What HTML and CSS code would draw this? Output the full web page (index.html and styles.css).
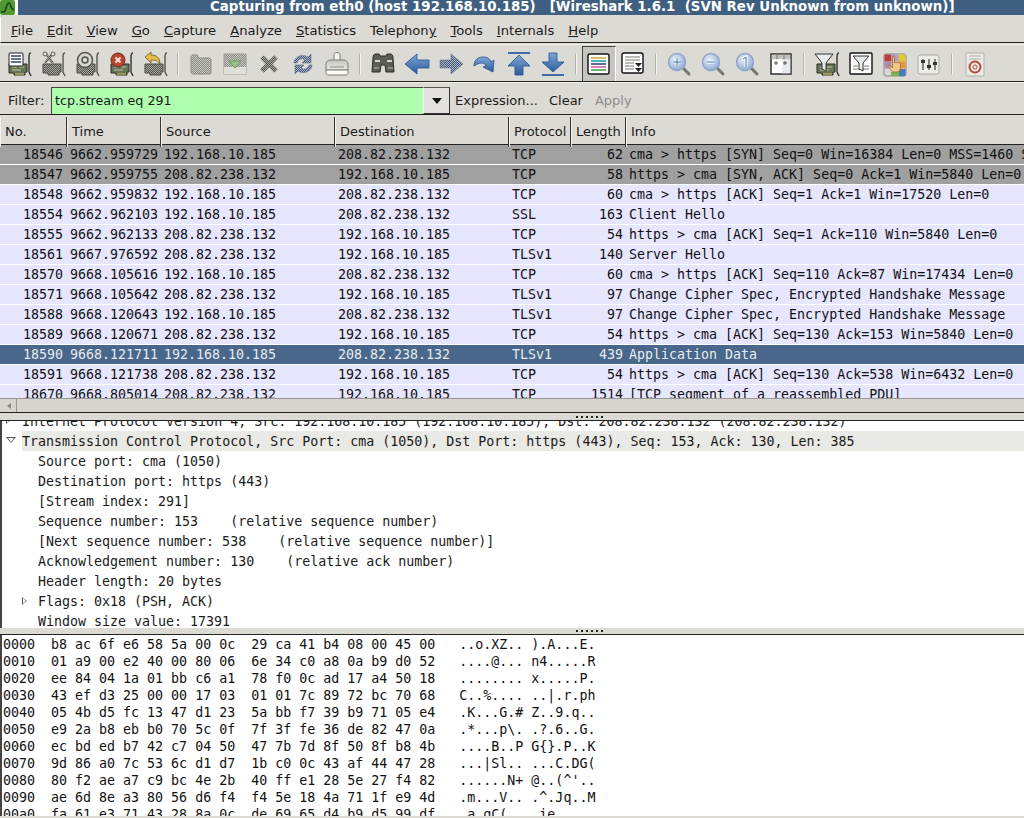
FILE: index.html
```html
<!DOCTYPE html>
<html lang="en">
<head>
    <meta charset="UTF-8">
    <title>Capturing from eth0</title>
    <link rel="stylesheet" href="styles.css">
</head>
<body>
    <!-- Shared icon parts -->
    <svg class="sprite">
        <defs>
            <pattern id="dith" width="2" height="2" patternUnits="userSpaceOnUse">
                <rect width="2" height="2" fill="#a8a8a2"/>
                <rect width="1" height="1" fill="#55554f"/>
                <rect x="1" y="1" width="1" height="1" fill="#55554f"/>
            </pattern>
            <pattern id="dithLight" width="2" height="2" patternUnits="userSpaceOnUse">
                <rect width="2" height="2" fill="#c8c8c2"/>
                <rect width="1" height="1" fill="#8c8c86"/>
                <rect x="1" y="1" width="1" height="1" fill="#8c8c86"/>
            </pattern>
            <pattern id="dithBlue" width="2" height="2" patternUnits="userSpaceOnUse">
                <rect width="2" height="2" fill="#a9b4c4"/>
                <rect width="1" height="1" fill="#44597a"/>
                <rect x="1" y="1" width="1" height="1" fill="#44597a"/>
            </pattern>
            <linearGradient id="blue" x1="0" y1="0" x2="0" y2="1">
                <stop offset="0" stop-color="#7fa6d6"/>
                <stop offset="1" stop-color="#2a5c9e"/>
            </linearGradient>
            <linearGradient id="printer" x1="0" y1="0" x2="0" y2="1">
                <stop offset="0" stop-color="#c4c4be"/>
                <stop offset="1" stop-color="#ecece8"/>
            </linearGradient>
            <radialGradient id="lens" cx="0.4" cy="0.35" r="0.8">
                <stop offset="0" stop-color="#e6eefa"/>
                <stop offset="1" stop-color="#7f9fcc"/>
            </radialGradient>
            <g id="card">
                <path d="M4 14h18v8h-2v3h-11v-2h-5z" fill="#66745a" stroke="#2b2b27"/>
                <path d="M7 17h5M14 17h5M7 20h9" stroke="#c4c89c"/>
                <path d="M10 24h9" stroke="#b5a654" stroke-width="1.5"/>
                <path d="M26 3c-2 0-2 2-2 4v15l2 4" fill="none" stroke="#33332f" stroke-width="1.4"/>
            </g>
            <g id="cardOff">
                <path d="M4 14h18v8h-2v3h-11v-2h-5z" fill="url(#dith)" stroke="#4a4a46"/>
                <path d="M26 3c-2 0-2 2-2 4v15l2 4" fill="none" stroke="#55554f" stroke-width="1.4"/>
            </g>
            <g id="glass">
                <path d="M18 18l6 6" stroke="#77776f" stroke-width="3" stroke-linecap="round"/>
                <circle cx="12" cy="12" r="8.5" fill="url(#lens)" stroke="#8fa6c6" stroke-width="1.5"/>
            </g>
        </defs>
    </svg>

    <div class="titlebar">
        <svg class="app-icon" viewBox="0 0 15 15"><rect width="15" height="15" rx="2" fill="#4f9a35"/><path d="M1 12h3c2 0 2-9 5-9 2 0 1 6 5 7" fill="none" stroke="#123f10" stroke-width="1.5"/></svg>
        <div class="title-text">Capturing from eth0 (host 192.168.10.185)   [Wireshark 1.6.1  (SVN Rev Unknown from unknown)]</div>
    </div>

    <div class="menubar">
        <span class="menu-item"><u>F</u>ile</span>
        <span class="menu-item"><u>E</u>dit</span>
        <span class="menu-item"><u>V</u>iew</span>
        <span class="menu-item"><u>G</u>o</span>
        <span class="menu-item"><u>C</u>apture</span>
        <span class="menu-item"><u>A</u>nalyze</span>
        <span class="menu-item"><u>S</u>tatistics</span>
        <span class="menu-item">Telephon<u>y</u></span>
        <span class="menu-item"><u>T</u>ools</span>
        <span class="menu-item"><u>I</u>nternals</span>
        <span class="menu-item"><u>H</u>elp</span>
    </div>

    <div class="toolbar">
        <!-- Capture -->
        <span class="tool"><svg viewBox="0 0 28 28"><use href="#card"/><rect x="4" y="3" width="14" height="13" rx="1" fill="#fff" stroke="#222"/><path d="M6 6h10M6 9h10M6 12h10" stroke="#33475f" stroke-width="1.5"/></svg></span>
        <span class="tool"><svg viewBox="0 0 28 28"><use href="#cardOff"/><path d="M6 3l8 10M14 3l-8 10" stroke="url(#dith)" stroke-width="2.5"/><circle cx="6" cy="4" r="2" fill="#e8e8e4" stroke="#55554f"/><circle cx="14" cy="4" r="2" fill="#e8e8e4" stroke="#55554f"/></svg></span>
        <span class="tool"><svg viewBox="0 0 28 28"><use href="#cardOff"/><circle cx="12" cy="10" r="7.5" fill="#d8d8d2" stroke="#55554f" stroke-width="1.5"/><circle cx="12" cy="10" r="3" fill="none" stroke="#55554f" stroke-width="1.5"/></svg></span>
        <span class="tool"><svg viewBox="0 0 28 28"><use href="#card"/><circle cx="11" cy="10" r="7" fill="#b9452e" stroke="#6b2a1b"/><path d="M8.5 7.5l5 5M13.5 7.5l-5 5" stroke="#f4e4dc" stroke-width="2"/></svg></span>
        <span class="tool"><svg viewBox="0 0 28 28"><use href="#cardOff"/><path d="M4 7l6-5v3c6 0 9 3 9 9-2-3-4-4-9-4v3z" fill="#e6b84c" stroke="#6e5a24" stroke-width=".8"/></svg></span>
        <span class="tool-sep"></span>
        <!-- File -->
        <span class="tool"><svg viewBox="0 0 28 28"><path d="M4 8v14c0 1 1 2 2 2h17c1 0 1-1 1-2V10c0-1-1-2-2-2H12l-2-3H6C5 5 4 6 4 8z" fill="url(#dithLight)" stroke="#8c8c86"/></svg></span>
        <span class="tool"><svg viewBox="0 0 28 28"><rect x="3" y="4" width="22" height="20" fill="url(#dithLight)" stroke="#9c9c96"/><rect x="3" y="17" width="22" height="7" fill="#e0e0d8"/><path d="M8 11h12l-6 7z" fill="#9cc08c" stroke="#6e9a60"/></svg></span>
        <span class="tool"><svg viewBox="0 0 28 28"><path d="M7 7l14 14M21 7L7 21" stroke="url(#dith)" stroke-width="5"/></svg></span>
        <span class="tool"><svg viewBox="0 0 28 28"><path d="M5 13c0-6 8-10 14-6l3-3v9h-9l3-3c-3-2-7-1-8 3zM23 15c0 6-8 10-14 6l-3 3v-9h9l-3 3c3 2 7 1 8-3z" fill="url(#dithBlue)" stroke="#5f7490" stroke-width=".6"/></svg></span>
        <span class="tool"><svg viewBox="0 0 28 28"><path d="M11 11V5c0-1.500 .5-2.500 3-2.500s3 1 3 2.500v6z" fill="#f4f4f0" stroke="#7c7c76"/><path d="M3 14c0-2 2-4 4-4h14c2 0 4 2 4 4v6H3z" fill="url(#printer)" stroke="#7c7c76"/><path d="M3 20h22v3c0 1-1 2-2 2H5c-1 0-2-1-2-2z" fill="#fbfbf8" stroke="#7c7c76"/><path d="M7 17h14" stroke="#8c8c86"/></svg></span>
        <span class="tool-sep"></span>
        <!-- Navigation -->
        <span class="tool"><svg viewBox="0 0 28 28"><path d="M4 8c0-3 1-4 3-4h3l1 2h6l1-2h3c2 0 3 1 3 4l1 14h-8l-1-7h-4l-1 7H3z" fill="#5c5c58" stroke="#2b2b27"/><path d="M6 11h5M18 11h5" stroke="#d4d4ce" stroke-width="2"/><path d="M5 18h5M19 18h5" stroke="#8c8c86" stroke-width="2"/></svg></span>
        <span class="tool"><svg viewBox="0 0 28 28"><path d="M2 14l12-10v6h12v8H14v6z" fill="url(#blue)" stroke="#24508c" stroke-width=".8"/></svg></span>
        <span class="tool"><svg viewBox="0 0 28 28"><path d="M26 14L14 4v6H3v8h11v6z" fill="url(#dithBlue)" stroke="#5f7490" stroke-width=".6"/></svg></span>
        <span class="tool"><svg viewBox="0 0 28 28"><path d="M3 16c0-6 4-9 9-9s7 2 8 5l3-2-1 12-10-5 3-1c-1-2-2-3-4-3-3 0-5 1-8 3z" fill="url(#blue)" stroke="#24508c" stroke-width=".8"/></svg></span>
        <span class="tool"><svg viewBox="0 0 28 28"><path d="M3 3h22" stroke="#3f6ca8" stroke-width="2"/><path d="M14 5L3 16h7v9h8v-9h7z" fill="url(#blue)" stroke="#24508c" stroke-width=".8"/></svg></span>
        <span class="tool"><svg viewBox="0 0 28 28"><path d="M3 25h22" stroke="#3f6ca8" stroke-width="2"/><path d="M14 22L3 12h7V3h8v9h7z" fill="url(#blue)" stroke="#24508c" stroke-width=".8"/></svg></span>
        <span class="tool-sep"></span>
        <!-- View -->
        <span class="tool tool-active"><svg viewBox="0 0 28 28"><rect x="3" y="4" width="21" height="20" rx="2" fill="#fff" stroke="#111" stroke-width="1.4"/><path d="M6 8h15" stroke="#d0c060" stroke-width="2"/><path d="M6 11h15" stroke="#50b0b8" stroke-width="2"/><path d="M6 14h15" stroke="#6a6a9a" stroke-width="2"/><path d="M6 17h15" stroke="#e080b8" stroke-width="2"/><path d="M6 20h15" stroke="#70b070" stroke-width="2"/></svg></span>
        <span class="tool"><svg viewBox="0 0 28 28"><rect x="3" y="3" width="21" height="20" rx="2" fill="#fff" stroke="#111" stroke-width="1.4"/><path d="M6 7h15M6 10h15M6 13h9M6 16h9M6 19h9" stroke="#77776f"/><path d="M16 13h7l-3.500 4zM16 18h7l-3.500 4z" fill="#222"/></svg></span>
        <span class="tool-sep"></span>
        <span class="tool"><svg viewBox="0 0 28 28"><use href="#glass"/><path d="M8 12h8M12 8v8" stroke="#fff" stroke-width="2.500"/><path d="M8 12h8M12 8v8" stroke="#3f6ca8" stroke-width="1"/></svg></span>
        <span class="tool"><svg viewBox="0 0 28 28"><use href="#glass"/><path d="M8 12h8" stroke="#fff" stroke-width="3"/><path d="M8 12h8" stroke="#3f6ca8" stroke-width="1"/></svg></span>
        <span class="tool"><svg viewBox="0 0 28 28"><use href="#glass"/><path d="M10 9l3-2v10" fill="none" stroke="#fff" stroke-width="3"/><path d="M10 9l3-2v10" fill="none" stroke="#3f6ca8" stroke-width="1"/></svg></span>
        <span class="tool"><svg viewBox="0 0 28 28"><rect x="4" y="4" width="20" height="20" fill="#fff" stroke="#222" stroke-width="1.400"/><rect x="15" y="9" width="8.300" height="14.300" fill="#e6e8ee"/><rect x="4.700" y="4.700" width="18.600" height="4.500" fill="#c0c0bc"/><path d="M10 4.700v4.500M17 4.700v4.500" stroke="#77776f"/><path d="M7 13h4M9 11v4M16 13h4M18 11v4" stroke="#55554f"/></svg></span>
        <span class="tool-sep"></span>
        <!-- Filters and settings -->
        <span class="tool"><svg viewBox="0 0 28 28"><use href="#card"/><path d="M2 4h18l-7 9v8l-4-2v-6z" fill="#e8ecec" stroke="#33332f"/></svg></span>
        <span class="tool"><svg viewBox="0 0 28 28"><rect x="3" y="3" width="22" height="21" rx="1" fill="#fff" stroke="#111" stroke-width="1.400"/><path d="M6 16h5M17 16h5M6 19h16" stroke="#77776f"/><path d="M6 6h16l-6 7v8l-4-2v-6z" fill="#e8ecec" stroke="#33332f"/></svg></span>
        <span class="tool"><svg viewBox="0 0 28 28"><rect x="3" y="4" width="22" height="22" rx="2" fill="#d8d8e4" stroke="#88887f"/><rect x="3.500" y="4.500" width="7" height="7" fill="#b83c3c"/><rect x="17" y="4.500" width="7.500" height="7" fill="#e4c838"/><rect x="10.500" y="4.500" width="7" height="7" fill="#b0a0c8"/><rect x="3.500" y="11.500" width="7" height="7" fill="#b088a8"/><rect x="17" y="11.500" width="7.500" height="7" fill="#e89830"/><rect x="10" y="22" width="8" height="4" fill="#78b848"/><rect x="18" y="19" width="6.500" height="7" fill="#4878c0"/><path d="M12 6c1 0 1.500 1 1.500 2v5c1-1 2-1 2 0 1-1 2-1 2 0 1-1 2 0 2 1v4c0 3-2 4-4 4h-3c-2 0-3-3-5-6 0-1 1-1 2 0l2 2V8c0-1 0-2 1-2z" fill="#f0c88c" stroke="#a0622a" stroke-width=".8"/></svg></span>
        <span class="tool"><svg viewBox="0 0 28 28"><rect x="3" y="5" width="21" height="19" rx="2" fill="#ecece8" stroke="#a8a8a2"/><path d="M8 9v11M14 9v11M20 9v11" stroke="#66665f" stroke-width="1.500"/><rect x="6" y="10" width="4" height="3" fill="#33332f"/><rect x="12" y="15" width="4" height="3" fill="#33332f"/><rect x="18" y="12" width="4" height="3" fill="#33332f"/></svg></span>
        <span class="tool-sep"></span>
        <span class="tool"><svg viewBox="0 0 28 28"><rect x="5" y="3" width="18" height="23" rx="1" fill="#ecece6" stroke="#b0b0a8"/><path d="M8 6h12M8 9h12" stroke="#b0b0a8"/><circle cx="14" cy="17" r="5.500" fill="#f4e8e4" stroke="#b84a3c" stroke-width="2"/><circle cx="14" cy="17" r="2" fill="#ecece6" stroke="#b84a3c"/></svg></span>
    </div>

    <div class="filterbar">
        <span class="filter-label">Filter:</span>
        <div class="filter-entry">tcp.stream eq 291</div>
        <div class="filter-drop"><span class="drop-arrow"></span></div>
        <span class="filter-btn filter-expr">Expression...</span>
        <span class="filter-btn">Clear</span>
        <span class="filter-btn filter-off">Apply</span>
    </div>

    <!-- Packet list -->
    <div class="packet-head">
        <span>No.</span><span>Time</span><span>Source</span><span>Destination</span><span>Protocol</span><span>Length</span><span>Info</span>
    </div>
    <div class="packet-list">
        <div class="row row-syn"><span>18546</span><span>9662.959729</span><span>192.168.10.185</span><span>208.82.238.132</span><span>TCP</span><span>62</span><span>cma &gt; https [SYN] Seq=0 Win=16384 Len=0 MSS=1460 SACK_PERM=1</span></div>
        <div class="row row-syn"><span>18547</span><span>9662.959755</span><span>208.82.238.132</span><span>192.168.10.185</span><span>TCP</span><span>58</span><span>https &gt; cma [SYN, ACK] Seq=0 Ack=1 Win=5840 Len=0 MSS=1460</span></div>
        <div class="row"><span>18548</span><span>9662.959832</span><span>192.168.10.185</span><span>208.82.238.132</span><span>TCP</span><span>60</span><span>cma &gt; https [ACK] Seq=1 Ack=1 Win=17520 Len=0</span></div>
        <div class="row"><span>18554</span><span>9662.962103</span><span>192.168.10.185</span><span>208.82.238.132</span><span>SSL</span><span>163</span><span>Client Hello</span></div>
        <div class="row"><span>18555</span><span>9662.962133</span><span>208.82.238.132</span><span>192.168.10.185</span><span>TCP</span><span>54</span><span>https &gt; cma [ACK] Seq=1 Ack=110 Win=5840 Len=0</span></div>
        <div class="row"><span>18561</span><span>9667.976592</span><span>208.82.238.132</span><span>192.168.10.185</span><span>TLSv1</span><span>140</span><span>Server Hello</span></div>
        <div class="row"><span>18570</span><span>9668.105616</span><span>192.168.10.185</span><span>208.82.238.132</span><span>TCP</span><span>60</span><span>cma &gt; https [ACK] Seq=110 Ack=87 Win=17434 Len=0</span></div>
        <div class="row"><span>18571</span><span>9668.105642</span><span>208.82.238.132</span><span>192.168.10.185</span><span>TLSv1</span><span>97</span><span>Change Cipher Spec, Encrypted Handshake Message</span></div>
        <div class="row"><span>18588</span><span>9668.120643</span><span>192.168.10.185</span><span>208.82.238.132</span><span>TLSv1</span><span>97</span><span>Change Cipher Spec, Encrypted Handshake Message</span></div>
        <div class="row"><span>18589</span><span>9668.120671</span><span>208.82.238.132</span><span>192.168.10.185</span><span>TCP</span><span>54</span><span>https &gt; cma [ACK] Seq=130 Ack=153 Win=5840 Len=0</span></div>
        <div class="row row-selected"><span>18590</span><span>9668.121711</span><span>192.168.10.185</span><span>208.82.238.132</span><span>TLSv1</span><span>439</span><span>Application Data</span></div>
        <div class="row"><span>18591</span><span>9668.121738</span><span>208.82.238.132</span><span>192.168.10.185</span><span>TCP</span><span>54</span><span>https &gt; cma [ACK] Seq=130 Ack=538 Win=6432 Len=0</span></div>
        <div class="row"><span>18670</span><span>9668.805014</span><span>208.82.238.132</span><span>192.168.10.185</span><span>TCP</span><span>1514</span><span>[TCP segment of a reassembled PDU]</span></div>
    </div>
    <div class="hscroll"><span class="hscroll-btn"><span class="arrow-left"></span></span></div>
    <div class="pane-handle"><span class="grip"></span></div>

    <!-- Packet details -->
    <div class="details">
        <div class="detail-scroll">
            <div class="detail"><span class="tri tri-right"></span><span class="detail-text">Internet Protocol Version 4, Src: 192.168.10.185 (192.168.10.185), Dst: 208.82.238.132 (208.82.238.132)</span></div>
            <div class="detail"><span class="tri tri-down"></span><span class="detail-text detail-hl">Transmission Control Protocol, Src Port: cma (1050), Dst Port: https (443), Seq: 153, Ack: 130, Len: 385</span></div>
            <div class="detail sub">Source port: cma (1050)</div>
            <div class="detail sub">Destination port: https (443)</div>
            <div class="detail sub">[Stream index: 291]</div>
            <div class="detail sub">Sequence number: 153    (relative sequence number)</div>
            <div class="detail sub">[Next sequence number: 538    (relative sequence number)]</div>
            <div class="detail sub">Acknowledgement number: 130    (relative ack number)</div>
            <div class="detail sub">Header length: 20 bytes</div>
            <div class="detail sub flag-row"><span class="tri tri-right tri-flag"></span>Flags: 0x18 (PSH, ACK)</div>
            <div class="detail sub">Window size value: 17391</div>
        </div>
    </div>
    <div class="pane-handle pane-handle-low"><span class="grip"></span></div>

    <!-- Packet bytes -->
    <pre class="hexdump">0000  b8 ac 6f e6 58 5a 00 0c  29 ca 41 b4 08 00 45 00   ..o.XZ.. ).A...E.
0010  01 a9 00 e2 40 00 80 06  6e 34 c0 a8 0a b9 d0 52   ....@... n4.....R
0020  ee 84 04 1a 01 bb c6 a1  78 f0 0c ad 17 a4 50 18   ........ x.....P.
0030  43 ef d3 25 00 00 17 03  01 01 7c 89 72 bc 70 68   C..%.... ..|.r.ph
0040  05 4b d5 fc 13 47 d1 23  5a bb f7 39 b9 71 05 e4   .K...G.# Z..9.q..
0050  e9 2a b8 eb b0 70 5c 0f  7f 3f fe 36 de 82 47 0a   .*...p\. .?.6..G.
0060  ec bd ed b7 42 c7 04 50  47 7b 7d 8f 50 8f b8 4b   ....B..P G{}.P..K
0070  9d 86 a0 7c 53 6c d1 d7  1b c0 0c 43 af 44 47 28   ...|Sl.. ...C.DG(
0080  80 f2 ae a7 c9 bc 4e 2b  40 ff e1 28 5e 27 f4 82   ......N+ @..(^'..
0090  ae 6d 8e a3 80 56 d6 f4  f4 5e 18 4a 71 1f e9 4d   .m...V.. .^.Jq..M
00a0  fa 61 e3 71 43 28 8a 0c  de 69 65 d4 b9 d5 99 df   .a.qC(.. .ie.....</pre>
</body>
</html>
```
FILE: styles.css
```css
html, body {
    margin: 0;
    height: 818px;
    overflow: hidden;
}
body {
    background-color: #dcdad5;
    color: #1a1a1a;
    font-family: "DejaVu Sans", sans-serif;
    font-size: 13px;
}
.sprite {
    display: block;
    width: 0;
    height: 0;
}

/* Window title */
.titlebar {
    display: flex;
    height: 15px;
    margin-bottom: 2px;
    background-color: #fff;
    overflow: hidden;
}
.app-icon {
    width: 15px;
    height: 15px;
    flex: none;
}
.title-text {
    flex: 1;
    margin-left: 3px;
    padding-left: 192px;
    background-color: #3f5f80;
    color: #fff;
    font-size: 13.33px;
    font-weight: bold;
    line-height: 14px;
    letter-spacing: 0.02px;
    white-space: pre;
    overflow: hidden;
}

/* Menu */
.menubar {
    display: flex;
    height: 26px;
    padding: 2px 0 0 3px;
    align-items: center;
    font-size: 13.15px;
    border-left: 1px solid #fff;
    border-bottom: 1px solid #222;
    box-sizing: border-box;
}
.menu-item {
    padding: 0 7px;
}

/* Toolbar */
.toolbar {
    display: flex;
    align-items: center;
    height: 38px;
    padding: 2px 0 0 2px;
    margin-top: 1px;
    border-top: 1px solid #f2f1ee;
    border-bottom: 1px solid #222;
    box-sizing: border-box;
}
.tool {
    display: flex;
    align-items: center;
    justify-content: center;
    flex: none;
    width: 34px;
    height: 34px;
}
.tool svg {
    width: 28px;
    height: 28px;
}
.tool-active {
    height: 35px;
    align-self: flex-end;
    background-color: #c6c4bf;
    border-left: 1px solid #444;
    border-top: 1px solid #444;
    border-right: 1px solid #fff;
    box-sizing: border-box;
}
.tool-sep {
    flex: none;
    width: 2px;
    height: 22px;
    margin: 0 5px;
    background-color: #f4f3f0;
    border-left: 1px solid #b4b2ac;
    box-sizing: border-box;
}

/* Display filter */
.filterbar {
    display: flex;
    align-items: center;
    height: 33px;
    padding: 4px 0 0 8px;
    border-top: 1px solid #f2f1ee;
    border-bottom: 1px solid #222;
    box-sizing: border-box;
}
.filter-label {
    width: 43px;
    flex: none;
}
.filter-entry {
    width: 372px;
    height: 27px;
    padding-left: 3px;
    font-size: 12.7px;
    line-height: 25px;
    background-color: #afffaf;
    border-top: 1px solid #444;
    border-left: 1px solid #444;
    box-sizing: border-box;
}
.filter-drop {
    display: flex;
    align-items: center;
    justify-content: center;
    width: 27px;
    height: 27px;
    background-color: #e4e2de;
    border-left: 1px solid #fff;
    border-top: 1px solid #555;
    border-right: 1px solid #333;
    border-bottom: 1px solid #333;
    box-sizing: border-box;
}
.drop-arrow {
    width: 0;
    height: 0;
    border-left: 5px solid transparent;
    border-right: 5px solid transparent;
    border-top: 6px solid #111;
}
.filter-btn {
    margin-left: 11px;
}
.filter-expr {
    margin-left: 5px;
}
.filter-off {
    margin-left: 12px;
    color: #8e8c88;
}

/* Packet list */
.packet-head,
.row {
    display: grid;
    grid-template-columns: 67px 94px 174px 174px 62px 55px 1fr;
}
.packet-head {
    height: 28px;
    margin-top: 2px;
    line-height: 30px;
    background-color: #dcdad5;
    border-bottom: 1px solid #222;
    box-sizing: border-box;
}
.packet-head span {
    padding-left: 5px;
    border-right: 1px solid #333;
    box-shadow: inset 1px 0 0 #f4f3f0;
}
.packet-head span:last-child {
    border-right: none;
}
.packet-list {
    height: 253px;
    background-color: #fff;
    overflow: hidden;
    font-family: "DejaVu Sans Mono", monospace;
    font-size: 13.3px;
}
.row {
    height: 19px;
    margin-bottom: 1px;
    line-height: 19px;
    background-color: #e7e6ff;
    color: #111;
    white-space: pre;
}
.row span {
    padding: 0 3px;
    overflow: hidden;
}
.row span:nth-child(1) {
    padding-right: 4px;
    text-align: right;
}
.row span:nth-child(6) {
    text-align: right;
}
.row-syn {
    background-color: #a0a0a0;
}
.row-selected {
    background-color: #48678a;
    color: #e8ebf0;
}

/* Scrollbar and pane handles */
.hscroll {
    display: flex;
    height: 15px;
    padding-left: 2px;
    background-color: #d6d4cf;
    border-top: 1px solid #9a9892;
    border-bottom: 1px solid #222;
    box-sizing: border-box;
}
.hscroll-btn {
    display: flex;
    align-items: center;
    justify-content: center;
    width: 14px;
    border-right: 1px solid #9a9892;
}
.arrow-left {
    width: 0;
    height: 0;
    border-top: 3px solid transparent;
    border-bottom: 3px solid transparent;
    border-right: 4px solid #888;
}
.pane-handle {
    display: flex;
    justify-content: center;
    align-items: center;
    height: 8px;
    padding-left: 158px;
    border-bottom: 1px solid #222;
    box-sizing: border-box;
}
.pane-handle-low {
    height: 7px;
}
.grip {
    width: 30px;
    height: 2px;
    background-image: linear-gradient(90deg, #222 2px, transparent 2px);
    background-size: 5px 2px;
}

/* Packet details */
.details {
    height: 207px;
    background-color: #fff;
    border-left: 2px solid #444;
    overflow: hidden;
    font-family: "DejaVu Sans Mono", monospace;
    font-size: 13.3px;
}
.detail-scroll {
    margin-top: -10px;
}
.detail {
    display: flex;
    height: 20px;
    line-height: 22px;
    white-space: pre;
}
.sub {
    padding-left: 36px;
}
.flag-row {
    position: relative;
}
.tri {
    flex: none;
    width: 17px;
    margin-left: 3px;
    position: relative;
}
.tri-flag {
    position: absolute;
    left: 16px;
    top: 6px;
    width: 0;
    height: 0;
}
.tri-right::before {
    content: "";
    position: absolute;
    top: 5px;
    left: 1px;
    width: 0;
    height: 0;
    border-top: 4px solid transparent;
    border-bottom: 4px solid transparent;
    border-left: 5px solid #555;
}
.tri-right::after {
    content: "";
    position: absolute;
    top: 6px;
    left: 2px;
    width: 0;
    height: 0;
    border-top: 3px solid transparent;
    border-bottom: 3px solid transparent;
    border-left: 3px solid #fff;
}
.tri-flag::before {
    top: 0;
}
.tri-flag::after {
    top: 1px;
}
.tri-down::before {
    content: "";
    position: absolute;
    top: 6px;
    left: 1px;
    width: 0;
    height: 0;
    border-left: 5px solid transparent;
    border-right: 5px solid transparent;
    border-top: 6px solid #555;
}
.tri-down::after {
    content: "";
    position: absolute;
    top: 7px;
    left: 3px;
    width: 0;
    height: 0;
    border-left: 3px solid transparent;
    border-right: 3px solid transparent;
    border-top: 4px solid #fff;
}
.detail-text {
    flex: 1;
    padding-left: 0;
}
.detail-hl {
    background-color: #e9e9e5;
}

/* Packet bytes */
.hexdump {
    height: 181px;
    margin: 0;
    padding: 1px 0 0 1px;
    background-color: #fff;
    border-left: 2px solid #444;
    box-sizing: border-box;
    font-family: "DejaVu Sans Mono", monospace;
    font-size: 13.3px;
    line-height: 17px;
    color: #111;
    overflow: hidden;
}
```
